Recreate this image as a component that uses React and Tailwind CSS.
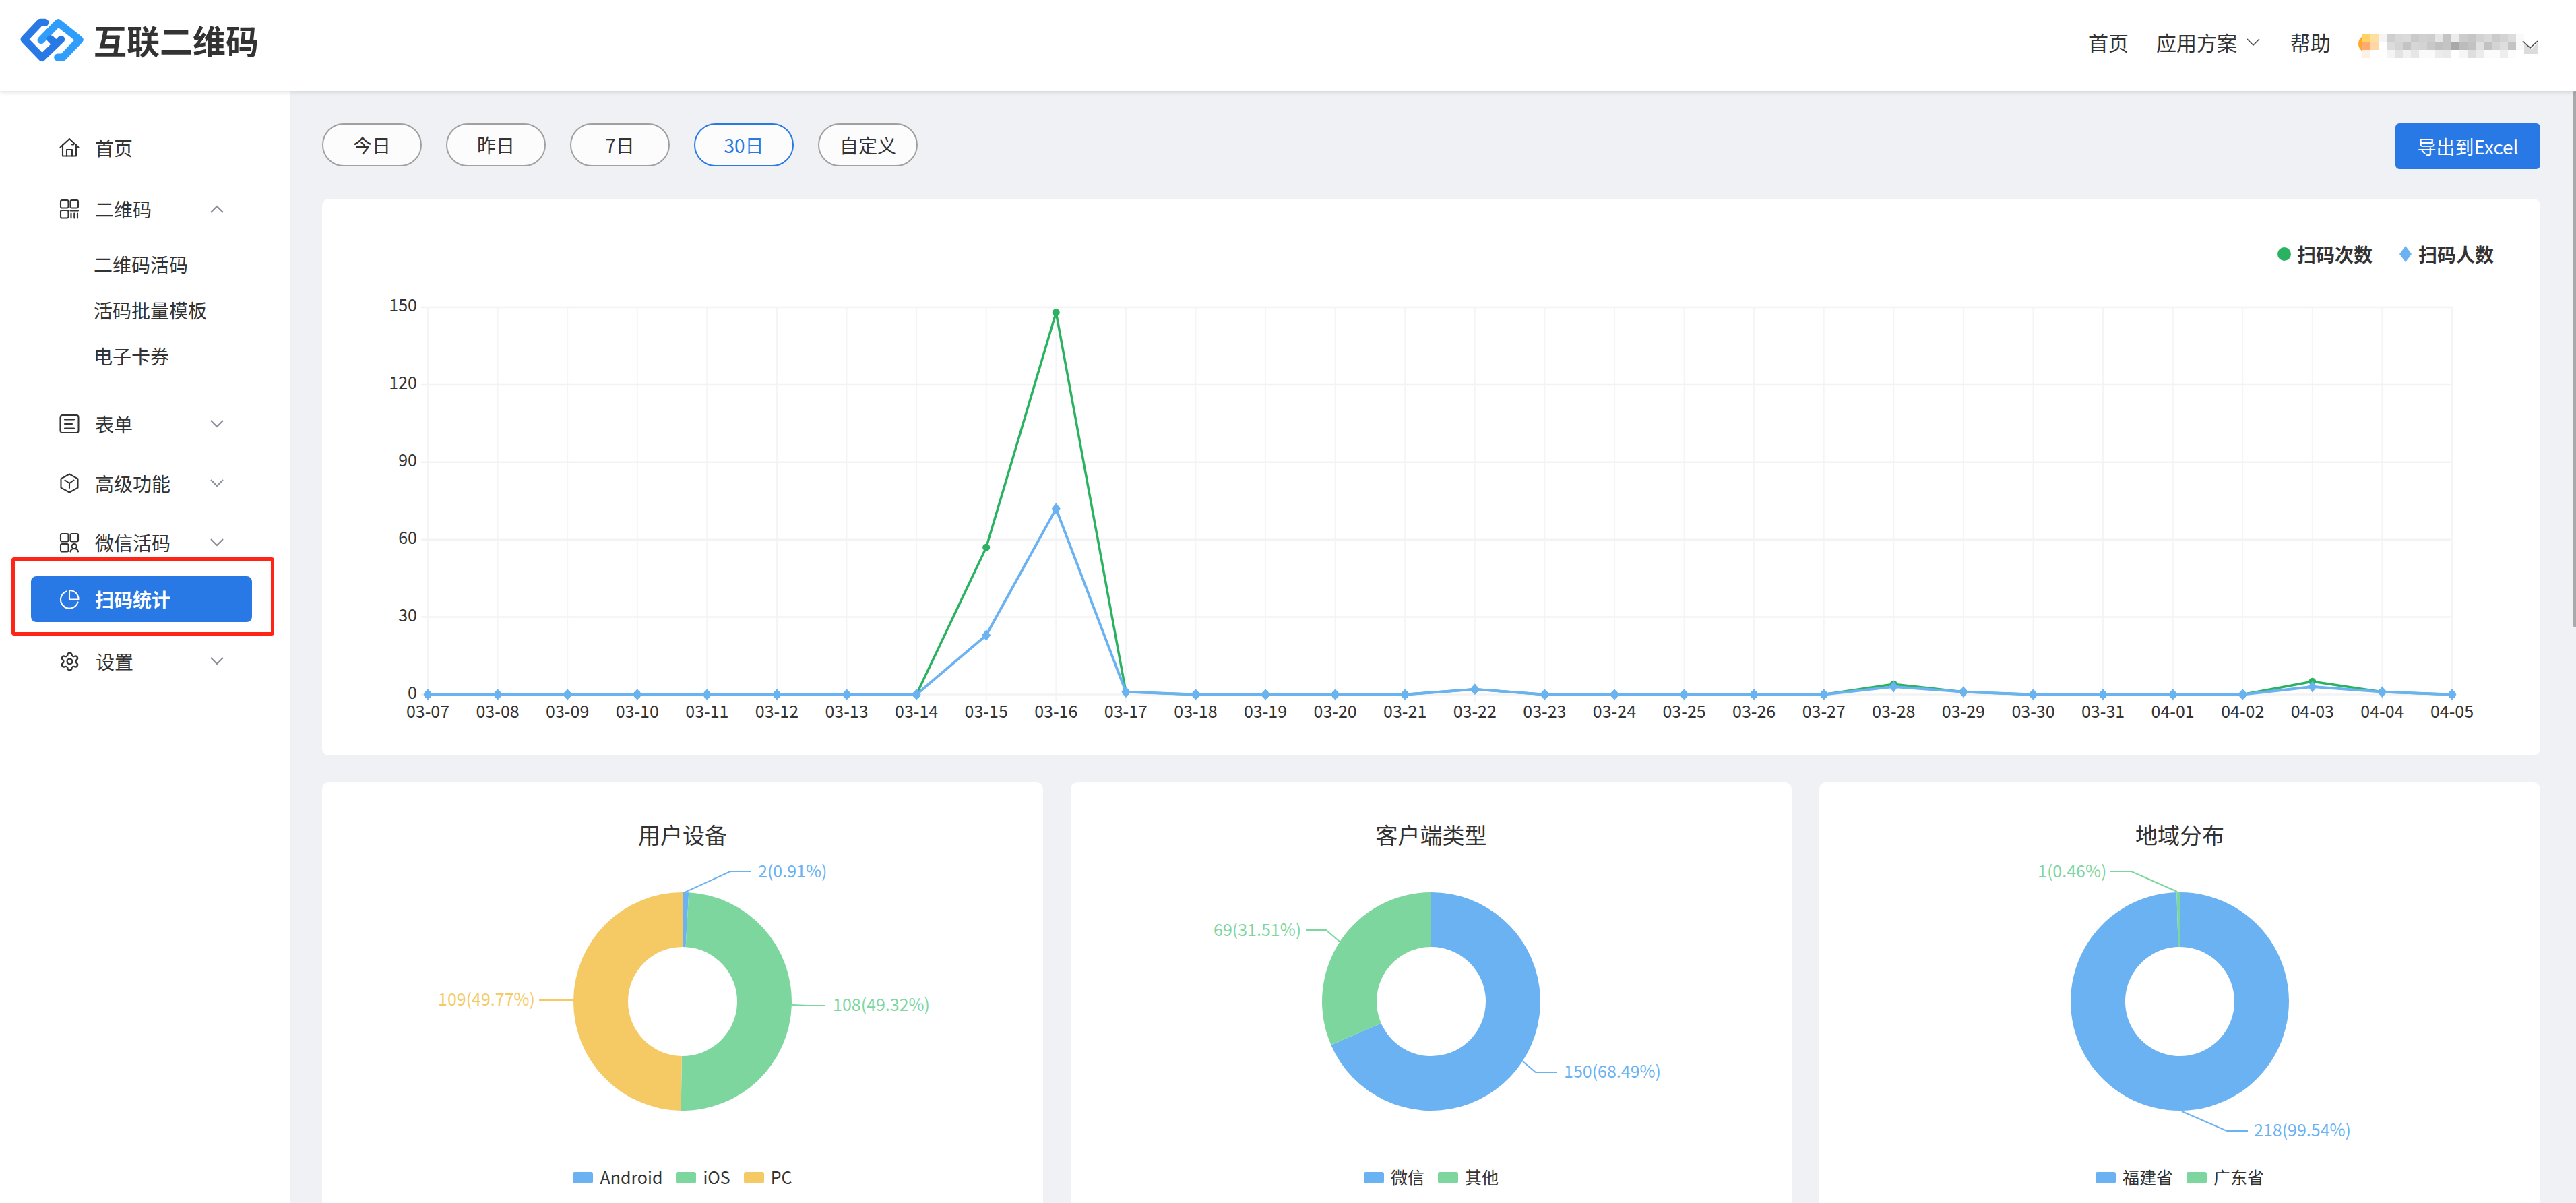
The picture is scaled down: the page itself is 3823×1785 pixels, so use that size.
import { Settings } from "lucide-react";

const dates = [
  "03-07", "03-08", "03-09", "03-10", "03-11", "03-12", "03-13", "03-14", "03-15", "03-16",
  "03-17", "03-18", "03-19", "03-20", "03-21", "03-22", "03-23", "03-24", "03-25", "03-26",
  "03-27", "03-28", "03-29", "03-30", "03-31", "04-01", "04-02", "04-03", "04-04", "04-05",
];
const scans = [0, 0, 0, 0, 0, 0, 0, 0, 57, 148, 1, 0, 0, 0, 0, 2, 0, 0, 0, 0, 0, 4, 1, 0, 0, 0, 0, 5, 1, 0];
const users = [0, 0, 0, 0, 0, 0, 0, 0, 23, 72, 1, 0, 0, 0, 0, 2, 0, 0, 0, 0, 0, 3, 1, 0, 0, 0, 0, 3, 1, 0];

const BLUE = "#6bb2f3";
const GREEN = "#7ed69f";
const YELLOW = "#f5ca64";

// chart coordinates are page pixels, the viewBox shifts them into the card
const xAt = (i) => 635 + i * (3004 / 29);
const yAt = (v) => 1030.5 - v * (574.5 / 150);

// pie card coordinates are relative to the card, cy = 325
const pies = [
  {
    title: "用户设备",
    slices: [
      { value: 0.91, color: BLUE },
      { value: 49.32, color: GREEN },
      { value: 49.77, color: YELLOW },
    ],
    labels: [
      { text: "2(0.91%)", x: 647, y: 130, color: BLUE, line: "538,163 606,132 636,132" },
      { text: "108(49.32%)", x: 758, y: 328, color: GREEN, line: "697,330 722,331 747,331" },
      { text: "109(49.77%)", x: 172, y: 320, color: YELLOW, line: "373,323 347,323 322,323" },
    ],
    legend: [
      { name: "Android", color: BLUE },
      { name: "iOS", color: GREEN },
      { name: "PC", color: YELLOW },
    ],
  },
  {
    title: "客户端类型",
    slices: [
      { value: 68.49, color: BLUE },
      { value: 31.51, color: GREEN },
    ],
    labels: [
      { text: "150(68.49%)", x: 732, y: 427, color: BLUE, line: "671,414 690,430 721,430" },
      { text: "69(31.51%)", x: 212, y: 217, color: GREEN, line: "399,236 379,219 349,219" },
    ],
    legend: [
      { name: "微信", color: BLUE },
      { name: "其他", color: GREEN },
    ],
  },
  {
    title: "地域分布",
    slices: [
      { value: 99.54, color: BLUE },
      { value: 0.46, color: GREEN },
    ],
    labels: [
      { text: "218(99.54%)", x: 645, y: 514, color: BLUE, line: "538,488 605,517 636,517" },
      { text: "1(0.46%)", x: 324, y: 130, color: GREEN, line: "531,162 463,132 432,132" },
    ],
    legend: [
      { name: "福建省", color: BLUE },
      { name: "广东省", color: GREEN },
    ],
  },
];

const mosaic = [
  ["#ffd268", "#ffdf9f", "#f5f5f5", "#cfcfcf", "#d8d8d8", "#dadada", "#cacaca", "#d0d0d0", "#cecece", "#e6e6e6", "#c4c4c4", "#ececec", "#cccccc", "#c6c6c6", "#d2d2d2", "#d9d9d9", "#cbcbcb", "#d3d3d3", "#dcdcdc", "#f9f9f9"],
  ["#ffab6f", "#ffd6a6", "#ffffff", "#dcdcdc", "#d4d4d4", "#c4c4c4", "#d6d6d6", "#d3d3d3", "#c8c8c8", "#c0c0c0", "#c4c4c4", "#a8a8a8", "#bcbcbc", "#c2c2c2", "#e0e0e0", "#c2c2c2", "#d4d4d4", "#dedede", "#c4c4c4", "#f9f9f9"],
  ["#fff0e6", "#ffffff", "#ffffff", "#f4f4f4", "#e3e3e3", "#f1f1f1", "#e6e6e6", "#fafafa", "#fafafa", "#ececec", "#e9e9e9", "#ffffff", "#f6f6f6", "#dedede", "#ebebeb", "#fbfbfb", "#fbfbfb", "#eeeeee", "#fcfcfc", "#ffffff"],
];

function Logo() {
  return (
    <svg width="104" height="72" viewBox="0 0 312 216" fill="none" strokeWidth="33" strokeLinecap="round" strokeLinejoin="round">
      <path d="M108 110 L184 32 L280 108 L205 186 L182 186" stroke="#2e9dfb" />
      <path d="M126 31 L104 31 L33 106 L112 188 L197 106" stroke="#2878e5" />
      <path d="M150 104 L172 126" stroke="#2878e5" />
    </svg>
  );
}

function Chevron({ up, thin, className }) {
  return (
    <svg width="22" height="12" viewBox="0 0 22 12" fill="none" stroke="currentColor" strokeWidth={thin ? 1.5 : 2.2} className={className}>
      <path d={up ? "M2 11 L11 2 L20 11" : "M2 1 L11 10 L20 1"} />
    </svg>
  );
}

function Icon({ children }) {
  return (
    <svg width="30" height="30" viewBox="0 0 30 30" fill="none" stroke="currentColor" strokeWidth="2.1" strokeLinejoin="round" strokeLinecap="round" className="shrink-0">
      {children}
    </svg>
  );
}

const icons = {
  home: (
    <Icon>
      <path d="M1.5 14.5 L15 2 L28.5 14.5" />
      <path d="M5 11 V27.5 H25 V11" />
      <path d="M11 27.5 V18 H19 V27.5" />
      <path d="M19 10.5 H21" />
    </Icon>
  ),
  qr: (
    <Icon>
      <rect x="2" y="2" width="11.5" height="11.5" rx="2" />
      <rect x="16.5" y="2" width="11.5" height="11.5" rx="2" />
      <rect x="2" y="17" width="11.5" height="11.5" rx="2" />
      <path d="M16.5 17.5 H28 M17.5 21.5 V28.5 M22.3 21.5 V28.5 M27 21.5 V28.5" />
    </Icon>
  ),
  form: (
    <Icon>
      <rect x="1.5" y="2" width="27" height="26" rx="3" />
      <path d="M8 8.5 H22 M8 15 H19 M8 21.5 H22" />
    </Icon>
  ),
  cube: (
    <Icon>
      <path d="M15 1.5 L27.5 8.3 V21.7 L15 28.5 L2.5 21.7 V8.3 Z" />
      <path d="M8.5 10.5 L15 15 L21.5 10.5 M15 15 V22" />
    </Icon>
  ),
  wechat: (
    <Icon>
      <rect x="2" y="2" width="11.5" height="11.5" rx="2" />
      <rect x="16.5" y="2" width="11.5" height="11.5" rx="2" />
      <rect x="2" y="17" width="11.5" height="11.5" rx="2" />
      <circle cx="22.2" cy="20.5" r="3.6" />
      <path d="M16.5 28.5 C17 25.5 19 24 22.2 24 C25.4 24 27.5 25.5 28 28.5" />
    </Icon>
  ),
  pie: (
    <Icon>
      <path d="M10.5 3.5 A13 13 0 1 0 27.5 19.5" />
      <path d="M15 2 A13 13 0 0 1 28.5 15.5 H15 Z" />
    </Icon>
  ),
  settings: <Settings size={31} strokeWidth={1.8} className="shrink-0" />,
};

function NavItem({ icon, label, chevron, active, className }) {
  return (
    <div
      className={`h-[64px] ml-[46px] mr-[56px] px-[42px] flex items-center gap-[23px] text-[28px] ${className} ${
        active ? "bg-[#2878e5] text-white font-bold rounded-[8px]" : "text-[#333333]"
      }`}
    >
      {icons[icon]}
      <span>{label}</span>
      {chevron && <Chevron up={chevron === "up"} className="ml-auto mr-[-1px] text-[#8a8f99]" />}
    </div>
  );
}

function SubItem({ label }) {
  return <div className="h-[68px] pl-[139px] flex items-center text-[28px] text-[#333333]">{label}</div>;
}

function Sidebar() {
  return (
    <aside className="relative w-[430px] shrink-0 bg-white pt-[52px]">
      <NavItem icon="home" label="首页" />
      <NavItem icon="qr" label="二维码" chevron="up" className="mt-[27px] mb-[16px]" />
      <SubItem label="二维码活码" />
      <SubItem label="活码批量模板" />
      <SubItem label="电子卡券" />
      <NavItem icon="form" label="表单" chevron="down" className="mt-[35px]" />
      <NavItem icon="cube" label="高级功能" chevron="down" className="mt-[24px]" />
      <NavItem icon="wechat" label="微信活码" chevron="down" className="mt-[24px]" />
      <NavItem icon="pie" label="扫码统计" active className="mt-[18px] !h-[68px]" />
      <NavItem icon="settings" label="设置" chevron="down" className="mt-[26px]" />
      {/* red annotation box around the current item */}
      <div className="absolute left-[17px] top-[692px] w-[390px] h-[116px] border-[5px] border-[#ff2415] rounded-[4px]" />
    </aside>
  );
}

function Header() {
  return (
    <header className="relative z-10 h-[135px] shrink-0 bg-white shadow-[0_2px_6px_rgba(0,0,0,0.12)] flex items-center justify-between pl-[25px] pr-[57px] text-[#333333]">
      <div className="flex items-center gap-[10px] mb-[18px]">
        <Logo />
        <span className="text-[49px] font-bold leading-none">互联二维码</span>
      </div>
      <div className="flex items-center text-[30px] mb-[10px]">
        <span>首页</span>
        <span className="ml-[41px]">应用方案</span>
        <Chevron thin className="ml-[13px] text-[#444444]" />
        <span className="ml-[44px]">帮助</span>
        <svg width="266" height="36" viewBox="-6 0 266 36" className="ml-[41px] mt-[10px]">
          <circle cx="7" cy="15" r="13" fill="#ffa82e" />
          {mosaic.map((row, y) =>
            row.map((color, x) => <rect key={`${x}-${y}`} x={x * 12} y={y * 12} width="12" height="12" fill={color} />)
          )}
          <path d="M240 13 L251 23 L260 13 V30 H240 Z" fill="#dcdcdc" />
          <path d="M238 11 L249 21 L260 11" fill="none" stroke="#444444" strokeWidth="1.5" />
        </svg>
      </div>
    </header>
  );
}

function LineChart() {
  const ticks = [0, 30, 60, 90, 120, 150];
  const points = (data) => data.map((v, i) => `${xAt(i)},${yAt(v)}`).join(" ");
  return (
    <svg width="3292" height="723" viewBox="478 398 3292 723" className="block">
      {dates.map((d, i) => (
        <line key={d} x1={xAt(i)} x2={xAt(i)} y1="456" y2="1041" stroke="#f5f5f5" strokeWidth="2" />
      ))}
      {ticks.map((t) => (
        <g key={t}>
          <line x1="625" x2="3639" y1={yAt(t)} y2={yAt(t)} stroke="#f3f3f3" strokeWidth="2.5" />
          <text x="619" y={yAt(t) - 5} textAnchor="end" dominantBaseline="central" fontSize="25" fill="#333333">
            {t}
          </text>
        </g>
      ))}
      {dates.map((d, i) => (
        <text key={d} x={xAt(i)} y="1054" textAnchor="middle" dominantBaseline="central" fontSize="25" fill="#333333">
          {d}
        </text>
      ))}
      <polyline points={points(scans)} fill="none" stroke="#29b260" strokeWidth="3.5" />
      {scans.map((v, i) => (
        <circle key={i} cx={xAt(i)} cy={yAt(v)} r="5.5" fill="#29b260" />
      ))}
      <polyline points={points(users)} fill="none" stroke={BLUE} strokeWidth="3.8" />
      {users.map((v, i) => {
        const x = xAt(i);
        const y = yAt(v);
        return <polygon key={i} points={`${x},${y - 8.5} ${x + 6.5},${y} ${x},${y + 8.5} ${x - 6.5},${y}`} fill={BLUE} />;
      })}
    </svg>
  );
}

function arc(start, end, r, r0, cx, cy) {
  const pt = (pct, rad) => {
    const a = (pct / 100) * Math.PI * 2 - Math.PI / 2;
    return `${cx + rad * Math.cos(a)} ${cy + rad * Math.sin(a)}`;
  };
  const large = end - start > 50 ? 1 : 0;
  return `M${pt(start, r)} A${r} ${r} 0 ${large} 1 ${pt(end, r)} L${pt(end, r0)} A${r0} ${r0} 0 ${large} 0 ${pt(start, r0)} Z`;
}

function PieCard({ title, slices, labels, legend }) {
  let acc = 0;
  return (
    <div className="flex-1 h-[700px] bg-white rounded-[10px] pt-[52px] text-[#333333]">
      <div className="h-[50px] text-center text-[33px] leading-[50px]">{title}</div>
      <svg width="1070" height="464" viewBox="0 102 1070 464" className="block">
        {slices.map((s) => {
          const start = acc;
          acc += s.value;
          return <path key={s.color} d={arc(start, acc, 162, 81, 535, 325)} fill={s.color} />;
        })}
        {labels.map((l) => (
          <g key={l.text}>
            <polyline points={l.line} fill="none" stroke={l.color} strokeWidth="2" />
            <text x={l.x} y={l.y} dominantBaseline="central" fontSize="25" fill={l.color}>
              {l.text}
            </text>
          </g>
        ))}
      </svg>
      <div className="h-[40px] flex justify-center items-center gap-[20px] text-[25px]">
        {legend.map((item) => (
          <div key={item.name} className="flex items-center gap-[10px]">
            <span className="w-[30px] h-[17px] rounded-[3px]" style={{ backgroundColor: item.color }} />
            <span>{item.name}</span>
          </div>
        ))}
      </div>
    </div>
  );
}

export default function App() {
  const ranges = ["今日", "昨日", "7日", "30日", "自定义"];
  return (
    <div className="relative h-screen overflow-hidden flex flex-col font-['Noto_Sans_CJK_SC','Noto_Sans',sans-serif]">
      <Header />
      <div className="flex-1 flex min-h-0">
        <Sidebar />
        <main className="flex-1 min-w-0 bg-[#eff1f5] pt-[48px] pl-[48px] pr-[53px]">
          <div className="flex items-start justify-between">
            <div className="flex gap-[36px]">
              {ranges.map((r) => (
                <button
                  key={r}
                  className={`w-[148px] h-[64px] rounded-[32px] border-[2.5px] bg-[#fcfcfc] text-[28px] ${
                    r === "30日" ? "border-[#2878e5] text-[#2878e5]" : "border-[#a0a0a0] text-[#333333]"
                  }`}
                >
                  {r}
                </button>
              ))}
            </div>
            <button className="w-[215px] h-[68px] rounded-[6px] bg-[#2878e5] text-white text-[28px]">导出到Excel</button>
          </div>

          <div className="mt-[44px] h-[826px] bg-white rounded-[10px] pt-[61px]">
            <div className="h-[42px] flex justify-end items-center pr-[69px] text-[28px] font-bold text-[#333333]">
              <span className="w-[20px] h-[20px] rounded-full bg-[#29b260] mr-[9px]" />
              <span>扫码次数</span>
              <svg width="18" height="24" viewBox="0 0 18 24" className="ml-[40px] mr-[10px]">
                <polygon points="9,0 18,12 9,24 0,12" fill={BLUE} />
              </svg>
              <span>扫码人数</span>
            </div>
            <LineChart />
          </div>

          <div className="mt-[40px] flex gap-[41px]">
            {pies.map((p) => (
              <PieCard key={p.title} {...p} />
            ))}
          </div>
        </main>
      </div>
      {/* page scrollbar thumb */}
      <div className="absolute right-0 top-[135px] w-[5px] h-[795px] bg-[#a9a9a9] rounded-l-[3px]" />
    </div>
  );
}
